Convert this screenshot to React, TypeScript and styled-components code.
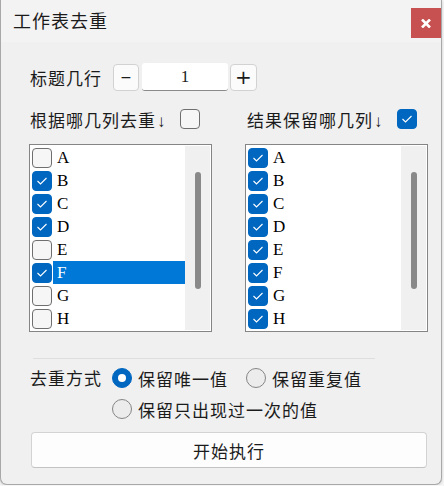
import React, { useState } from 'react';
import styled, { createGlobalStyle } from 'styled-components';

const GlobalStyle = createGlobalStyle`
  html, body {
    margin: 0;
    padding: 0;
    background: #f6f6f6;
  }
  * { box-sizing: border-box; }
`;

const CJK = `"Noto Sans CJK SC", "Noto Sans", sans-serif`;

const Window = styled.div`
  width: 442px;
  height: 485px;
  background: #f0f0f0;
  border: 1px solid #a8a8a8;
  border-top: none;
  border-radius: 0 0 7px 7px;
  box-shadow: 0 1px 3px rgba(0, 0, 0, 0.18);
  display: flex;
  flex-direction: column;
  overflow: hidden;
  font-family: ${CJK};
  color: #1b1b1b;
`;

const TitleBar = styled.div`
  height: 42px;
  background: #f3f3f3;
  display: flex;
  align-items: flex-start;
  justify-content: space-between;
  padding-left: 12px;
`;

const Title = styled.h1`
  margin: 0;
  font-size: 18px;
  font-weight: 400;
  letter-spacing: 1px;
  line-height: 40px;
`;

const CloseButton = styled.button`
  width: 30px;
  height: 30px;
  margin-top: 8px;
  border: none;
  padding: 0;
  background: #c75050;
  display: flex;
  align-items: center;
  justify-content: center;
  cursor: pointer;
`;

const Body = styled.div`
  padding: 21px 0 0 28px;
  display: flex;
  flex-direction: column;
`;

const Label = styled.span<{ $indent?: number }>`
  font-size: 17px;
  letter-spacing: 1px;
  white-space: nowrap;
  padding-left: ${p => p.$indent ?? 0}px;
`;

const Arrow = styled.span`
  font-family: "Liberation Sans", sans-serif;
  font-size: 17px;
  letter-spacing: 0;
  margin-left: 1px;
`;

const SpinRow = styled.div`
  display: flex;
  align-items: center;
  height: 28px;
`;

const Spinner = styled.div`
  display: flex;
  align-items: center;
  margin-left: 11px;
`;

const SpinButton = styled.button<{ $w: number; $size: number }>`
  width: ${p => p.$w}px;
  height: 27px;
  margin-top: 1px;
  padding: 0 0 1px;
  background: #fbfbfb;
  border: 1px solid #d2d2d2;
  border-radius: 4px;
  font-family: "DejaVu Sans", sans-serif;
  font-size: ${p => p.$size}px;
  font-weight: 400;
  line-height: 1;
  color: #1b1b1b;
  display: flex;
  align-items: center;
  justify-content: center;
`;

const SpinInput = styled.div`
  width: 86px;
  height: 28px;
  margin: 0 2px 0 3px;
  background: #ffffff;
  border-radius: 3px;
  border-bottom: 1px solid #8a8a8a;
  font-family: "Liberation Serif", serif;
  font-size: 17px;
  display: flex;
  align-items: center;
  justify-content: center;
`;

const Columns = styled.div`
  display: grid;
  grid-template-columns: 183px 183px;
  column-gap: 33px;
  margin-top: 16px;
`;

const Column = styled.div`
  display: flex;
  flex-direction: column;
`;

const ColumnHeader = styled.div<{ $indent: number }>`
  display: flex;
  align-items: center;
  gap: 14px;
  height: 24px;
  padding-left: ${p => p.$indent}px;
`;

const Box = styled.span<{ $checked: boolean }>`
  width: 20px;
  height: 20px;
  flex: none;
  border-radius: 4px;
  background: ${p => (p.$checked ? '#0067c0' : '#f6f6f6')};
  border: 1px solid ${p => (p.$checked ? '#0067c0' : '#6f6f6f')};
  display: flex;
  align-items: center;
  justify-content: center;
`;

const ListBox = styled.div`
  margin-top: 13px;
  height: 188px;
  border: 1px solid #858585;
  background: #ffffff;
  padding: 1px;
  display: flex;
`;

const Items = styled.div`
  flex: 1;
  display: flex;
  flex-direction: column;
`;

const Item = styled.div`
  height: 23px;
  display: flex;
  align-items: center;
  padding-left: 1px;
`;

const ItemText = styled.span<{ $selected: boolean }>`
  flex: 1;
  height: 23px;
  margin-left: 1px;
  padding-left: 4px;
  line-height: 23px;
  font-family: "Liberation Serif", serif;
  font-size: 17px;
  background: ${p => (p.$selected ? '#0078d7' : 'transparent')};
  color: ${p => (p.$selected ? '#ffffff' : '#000000')};
`;

const ScrollTrack = styled.div`
  width: 25px;
  background: #f0f0f0;
  display: flex;
  justify-content: center;
`;

const ScrollThumb = styled.div`
  width: 6px;
  height: 117px;
  margin-top: 26px;
  border-radius: 3px;
  background: #898989;
`;

const Divider = styled.div`
  width: 342px;
  height: 1px;
  margin: 26px 0 0 4px;
  background: #dedede;
`;

const ModeRow = styled.div`
  display: flex;
  align-items: flex-start;
  margin-top: 7px;
`;

const ModeLabel = styled(Label)`
  line-height: 24px;
  margin-right: 10px;
`;

const Options = styled.div`
  width: 280px;
  display: flex;
  flex-wrap: wrap;
  column-gap: 18px;
  row-gap: 7px;
`;

const Option = styled.label`
  height: 24px;
  display: flex;
  align-items: center;
  gap: 6px;
  font-size: 17px;
  letter-spacing: 1px;
  white-space: nowrap;
`;

const Radio = styled.span<{ $checked: boolean }>`
  width: 20px;
  height: 20px;
  flex: none;
  border-radius: 50%;
  background: ${p => (p.$checked ? '#0067c0' : '#ececec')};
  border: 1px solid ${p => (p.$checked ? '#0067c0' : '#858585')};
  display: flex;
  align-items: center;
  justify-content: center;

  &::after {
    content: '';
    display: ${p => (p.$checked ? 'block' : 'none')};
    width: 8px;
    height: 8px;
    border-radius: 50%;
    background: #ffffff;
  }
`;

const RunButton = styled.button`
  width: 396px;
  height: 36px;
  margin: 11px 0 0 2px;
  background: #fdfdfd;
  border: 1px solid #d3d3d3;
  border-bottom-color: #c2c2c2;
  border-radius: 4px;
  font-family: ${CJK};
  font-size: 17px;
  letter-spacing: 1px;
  color: #1b1b1b;
  cursor: pointer;
`;

const Check = () => (
  <svg width="12" height="10" viewBox="0 0 12 10">
    <polyline points="1.5,5 4.5,8 10.5,2" fill="none" stroke="#ffffff" strokeWidth="1.1" />
  </svg>
);

const CloseIcon = () => (
  <svg width="10" height="9" viewBox="0 0 10 9">
    <path d="M1 0.5 L9 8.5 M9 0.5 L1 8.5" stroke="#ffffff" strokeWidth="2.6" />
  </svg>
);

const letters = ['A', 'B', 'C', 'D', 'E', 'F', 'G', 'H'];

type ListProps = { checked: string[]; selected?: string };

const ColumnList: React.FC<ListProps> = ({ checked, selected }) => (
  <ListBox>
    <Items>
      {letters.map(l => (
        <Item key={l}>
          <Box $checked={checked.includes(l)}>{checked.includes(l) && <Check />}</Box>
          <ItemText $selected={selected === l}>{l}</ItemText>
        </Item>
      ))}
    </Items>
    <ScrollTrack>
      <ScrollThumb />
    </ScrollTrack>
  </ListBox>
);

export default function App() {
  const [mode, setMode] = useState(0);
  const modes = ['保留唯一值', '保留重复值', '保留只出现过一次的值'];

  return (
    <>
      <GlobalStyle />
      <Window>
        <TitleBar>
          <Title>工作表去重</Title>
          <CloseButton aria-label="关闭">
            <CloseIcon />
          </CloseButton>
        </TitleBar>

        <Body>
          <SpinRow>
            <Label $indent={1}>标题几行</Label>
            <Spinner>
              <SpinButton $w={26} $size={14}>−</SpinButton>
              <SpinInput>1</SpinInput>
              <SpinButton $w={27} $size={20}>+</SpinButton>
            </Spinner>
          </SpinRow>

          <Columns>
            <Column>
              <ColumnHeader $indent={1}>
                <Label>
                  根据哪几列去重<Arrow>↓</Arrow>
                </Label>
                <Box $checked={false} />
              </ColumnHeader>
              <ColumnList checked={['B', 'C', 'D', 'F']} selected="F" />
            </Column>
            <Column>
              <ColumnHeader $indent={2}>
                <Label>
                  结果保留哪几列<Arrow>↓</Arrow>
                </Label>
                <Box $checked>
                  <Check />
                </Box>
              </ColumnHeader>
              <ColumnList checked={letters} />
            </Column>
          </Columns>

          <Divider />

          <ModeRow>
            <ModeLabel $indent={1}>去重方式</ModeLabel>
            <Options>
              {modes.map((m, i) => (
                <Option key={m} onClick={() => setMode(i)}>
                  <Radio $checked={mode === i} />
                  {m}
                </Option>
              ))}
            </Options>
          </ModeRow>

          <RunButton>开始执行</RunButton>
        </Body>
      </Window>
    </>
  );
}
